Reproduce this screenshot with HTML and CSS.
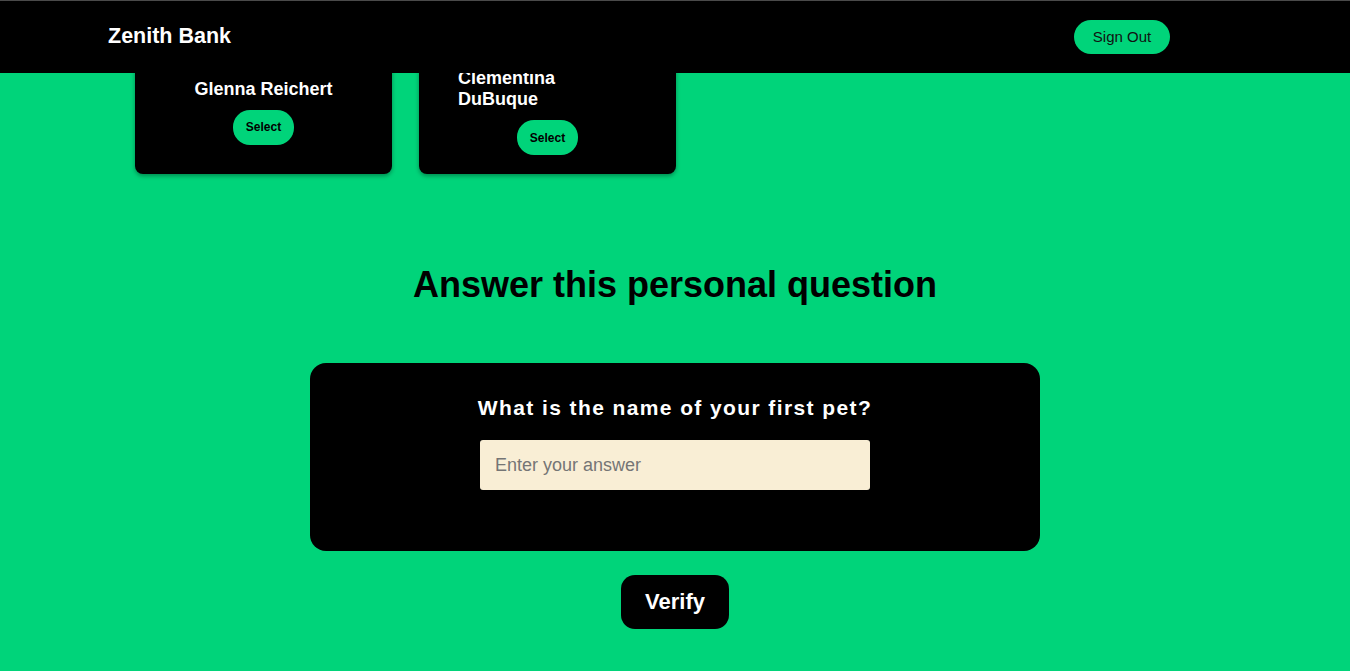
FILE: index.html
```html
<!DOCTYPE html>
<html>
<head>
<meta charset="utf-8">
<link rel="stylesheet" href="styles.css">
</head>
<body>
<header class="topbar">
  <div class="brand">Zenith Bank</div>
  <button class="signout">Sign Out</button>
</header>
<main class="page">
  <section class="cards">
    <div class="card">
      <h3 class="card-name">Glenna Reichert</h3>
      <button class="select">Select</button>
    </div>
    <div class="card">
      <h3 class="card-name">Clementina DuBuque</h3>
      <button class="select">Select</button>
    </div>
  </section>
  <h2 class="title">Answer this personal question</h2>
  <section class="question-box">
    <p class="question">What is the name of your first pet?</p>
    <input class="answer" type="text" placeholder="Enter your answer">
  </section>
  <button class="verify">Verify</button>
</main>
</body>
</html>
```
FILE: styles.css
```css
html, body {
  margin: 0;
  padding: 0;
}
body {
  background: #00d47a;
  font-family: "Liberation Sans", Arial, sans-serif;
  min-height: 671px;
}
.topbar {
  position: fixed;
  top: 0;
  left: 0;
  right: 0;
  height: 72px;
  background: #000;
  border-top: 1px solid #4a4a4a;
  display: flex;
  align-items: center;
  justify-content: space-between;
  padding: 0 180px 0 108px;
  z-index: 10;
}
.brand {
  color: #fff;
  font-weight: bold;
  font-size: 21.5px;
  margin-top: -2px;
}
.signout {
  background: #00d47a;
  color: #111;
  border: none;
  border-radius: 17px;
  width: 96px;
  height: 34px;
  font-family: "Liberation Sans", Arial, sans-serif;
  font-size: 15px;
  margin-top: -1px;
}
.page {
  display: flex;
  flex-direction: column;
  align-items: center;
}
.cards {
  align-self: stretch;
  display: flex;
  gap: 27px;
  padding-left: 135px;
}
.card {
  width: 257px;
  box-sizing: border-box;
  background: #000;
  border-radius: 0 0 8px 8px;
  box-shadow: 0 2px 4px rgba(0, 0, 0, 0.35);
  padding: 68px 39px 19px;
  display: flex;
  flex-direction: column;
  align-items: center;
  justify-content: center;
}
.card-name {
  margin: 0 0 10px;
  color: #fff;
  font-size: 18px;
  line-height: 21px;
  font-weight: bold;
}
.select {
  width: 61px;
  height: 35px;
  border: none;
  border-radius: 17px;
  background: #00d47a;
  color: #000;
  font-family: "Liberation Sans", Arial, sans-serif;
  font-weight: bold;
  font-size: 12px;
  box-shadow: 0 1px 2px rgba(0, 0, 0, 0.3);
}
.title {
  margin: 90px 0 58px;
  font-size: 36px;
  line-height: 41px;
  font-weight: bold;
  color: #000;
}
.question-box {
  width: 730px;
  height: 188px;
  box-sizing: border-box;
  background: #000;
  border-radius: 16px;
  padding-top: 33px;
  display: flex;
  flex-direction: column;
  align-items: center;
}
.question {
  margin: 0 0 20px;
  color: #fff;
  font-weight: bold;
  font-size: 21px;
  line-height: 24px;
  letter-spacing: 1.4px;
}
.answer {
  width: 390px;
  height: 50px;
  box-sizing: border-box;
  border: none;
  border-radius: 3px;
  background: #f9eed5;
  padding: 0 15px;
  font-family: "Liberation Sans", Arial, sans-serif;
  font-size: 18px;
  outline: none;
}
.answer::placeholder {
  color: #757575;
}
.verify {
  margin-top: 24px;
  width: 108px;
  height: 54px;
  border: none;
  border-radius: 14px;
  background: #000;
  color: #fff;
  font-family: "Liberation Sans", Arial, sans-serif;
  font-weight: bold;
  font-size: 22px;
}
```
